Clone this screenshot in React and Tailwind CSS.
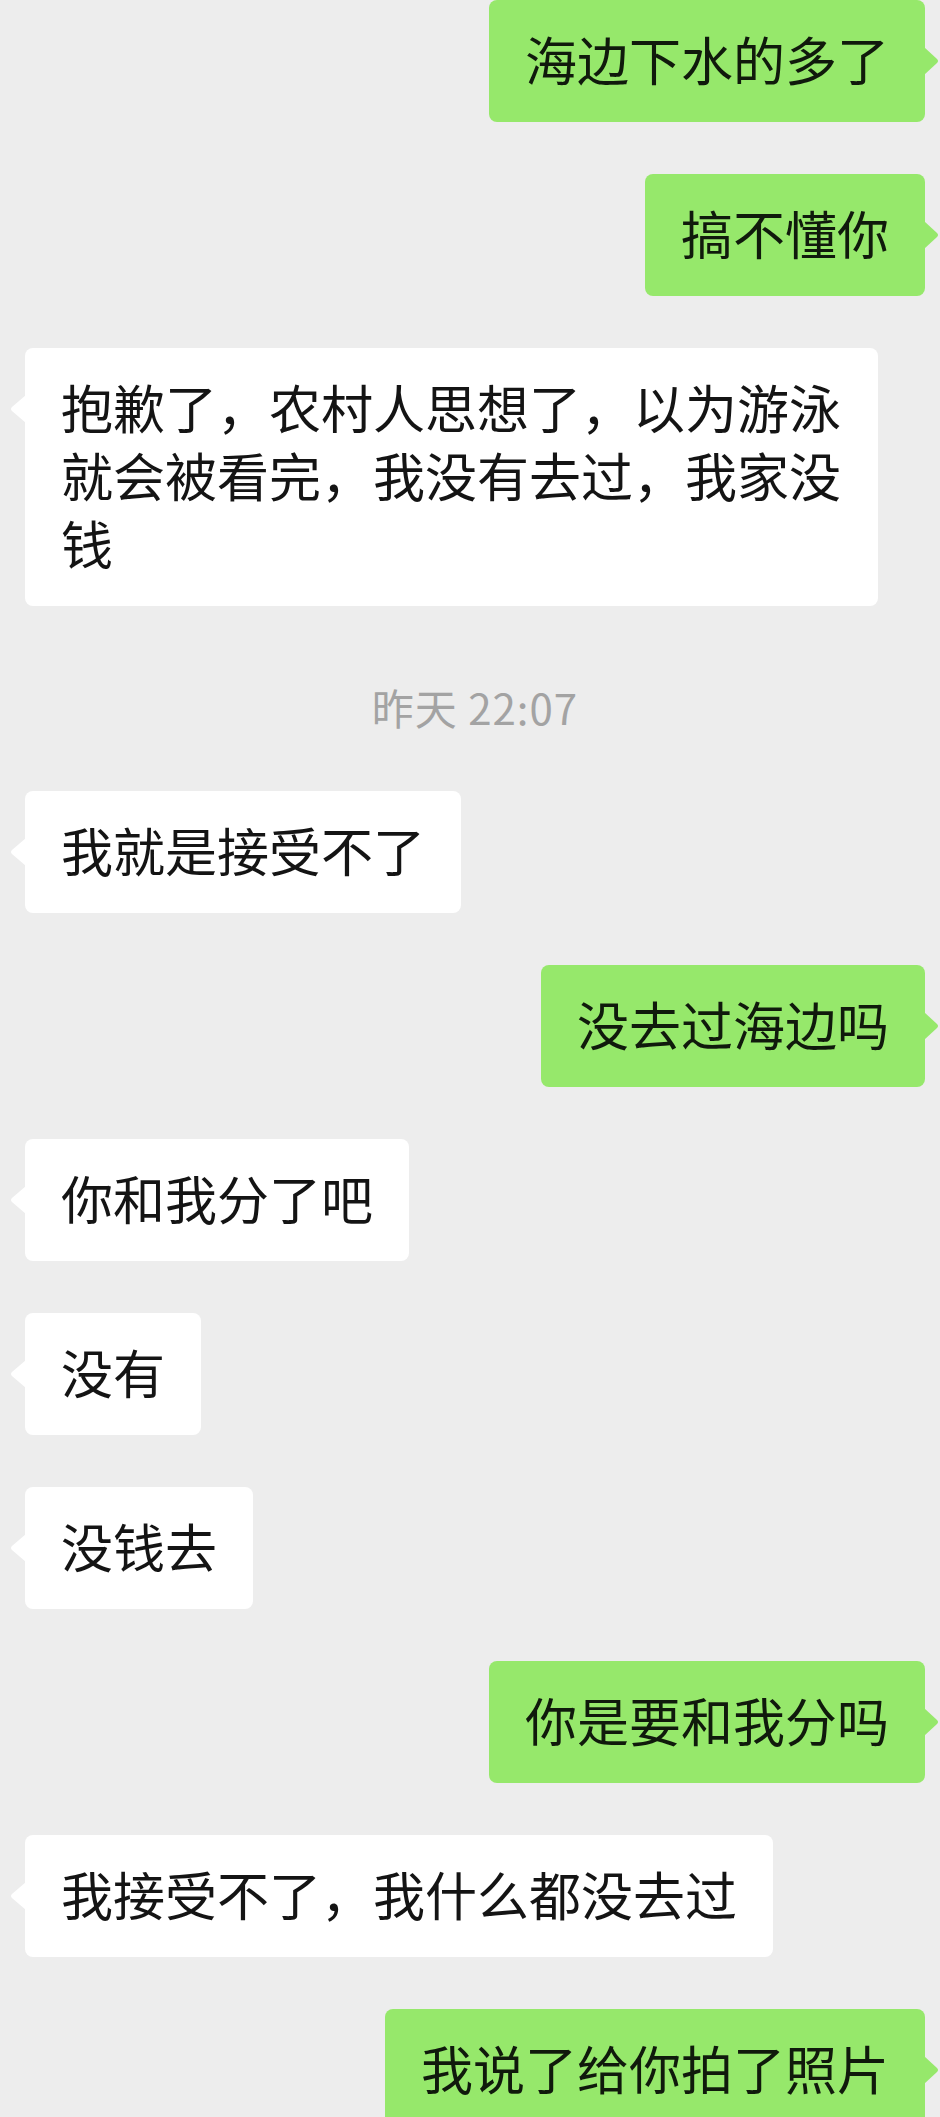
import React from "react";

const FONT = { fontFamily: '"Noto Sans CJK SC", "Noto Sans", sans-serif' };

function TailLeft() {
  return (
    <svg
      className="absolute left-[-15px] top-[47px]"
      width="16"
      height="28"
      viewBox="0 0 16 28"
    >
      <path d="M16 0 L2 12 Q0 14 2 16 L16 28 Z" fill="#ffffff" />
    </svg>
  );
}

function TailRight() {
  return (
    <svg
      className="absolute right-[-14px] top-[47px]"
      width="15"
      height="28"
      viewBox="0 0 15 28"
    >
      <path d="M0 0 L13 12 Q15 14 13 16 L0 28 Z" fill="#96e86b" />
    </svg>
  );
}

function Left({ children }) {
  return (
    <div className="flex justify-start">
      <div className="relative max-w-[853px] rounded-[8px] bg-white px-[36px] pt-[25px] pb-[29px] text-[52px] leading-[68px] text-[#141414]">
        <TailLeft />
        {children}
      </div>
    </div>
  );
}

function Right({ children }) {
  return (
    <div className="flex justify-end">
      <div className="relative max-w-[853px] rounded-[8px] bg-[#96e86b] px-[36px] pt-[25px] pb-[29px] text-[52px] leading-[68px] text-[#101a0c]">
        <TailRight />
        {children}
      </div>
    </div>
  );
}

export default function App() {
  return (
    <div
      className="h-[2117px] w-[940px] overflow-hidden bg-[#ededed]"
      style={FONT}
    >
      <div className="flex flex-col gap-[52px] pl-[25px] pr-[15px]">
        <Right>海边下水的多了</Right>
        <Right>搞不懂你</Right>
        <Left>抱歉了，农村人思想了，以为游泳就会被看完，我没有去过，我家没钱</Left>
        <div className="flex h-[81px] justify-center pt-[28px]">
          <span className="text-[42px] leading-[42px] tracking-[1px] text-[#a3a3a3]">
            昨天 22:07
          </span>
        </div>
        <Left>我就是接受不了</Left>
        <Right>没去过海边吗</Right>
        <Left>你和我分了吧</Left>
        <Left>没有</Left>
        <Left>没钱去</Left>
        <Right>你是要和我分吗</Right>
        <Left>我接受不了，我什么都没去过</Left>
        <Right>我说了给你拍了照片</Right>
      </div>
    </div>
  );
}
